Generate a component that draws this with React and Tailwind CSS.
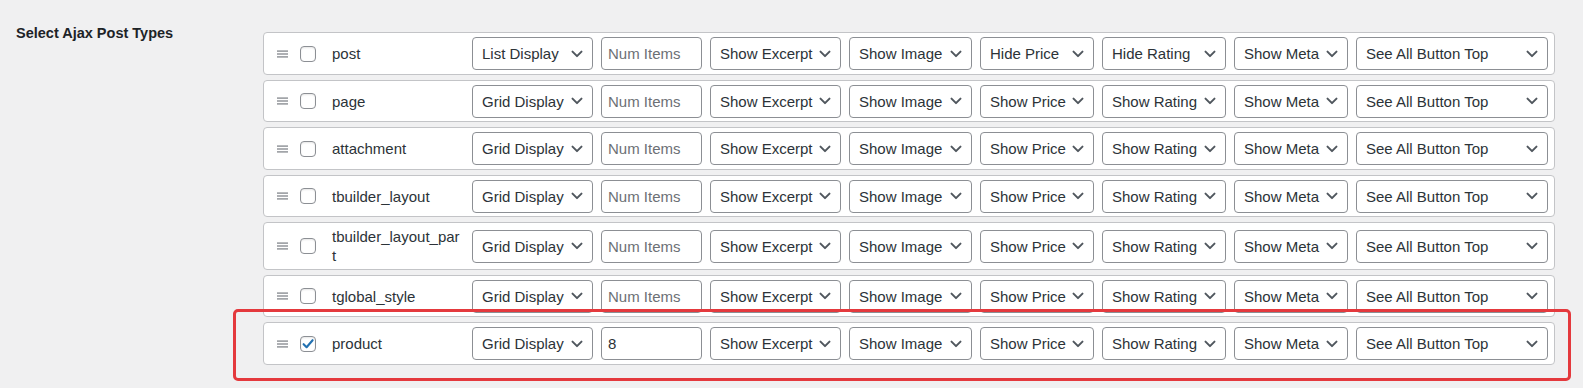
import React from "react";

const rows = [
  { name: "post", display: "List Display", num: "", price: "Hide Price", rating: "Hide Rating", checked: false },
  { name: "page", display: "Grid Display", num: "", price: "Show Price", rating: "Show Rating", checked: false },
  { name: "attachment", display: "Grid Display", num: "", price: "Show Price", rating: "Show Rating", checked: false },
  { name: "tbuilder_layout", display: "Grid Display", num: "", price: "Show Price", rating: "Show Rating", checked: false },
  { name: "tbuilder_layout_part", display: "Grid Display", num: "", price: "Show Price", rating: "Show Rating", checked: false },
  { name: "tglobal_style", display: "Grid Display", num: "", price: "Show Price", rating: "Show Rating", checked: false },
  { name: "product", display: "Grid Display", num: "8", price: "Show Price", rating: "Show Rating", checked: true },
];

function Chevron() {
  return (
    <svg width="12" height="8" viewBox="0 0 12 8" className="shrink-0">
      <path d="M1.5 1.6 L6 6.1 L10.5 1.6" fill="none" stroke="#50575e" strokeWidth="2" strokeLinecap="round" strokeLinejoin="round" />
    </svg>
  );
}

function Select({ label, w }) {
  return (
    <div className={`flex h-[33px] shrink-0 items-center justify-between whitespace-nowrap rounded-[4px] border border-[#8c8f94] bg-white pl-[9px] pr-[9px] text-[15px] leading-[19px] text-[#2c3338] ${w}`}>
      <span>{label}</span>
      <Chevron />
    </div>
  );
}

function Hamburger() {
  return (
    <svg width="11" height="8" viewBox="0 0 11 8" className="shrink-0">
      <rect x="0" y="0.4" width="11" height="1.4" fill="#8c8f94" />
      <rect x="0" y="3.3" width="11" height="1.4" fill="#8c8f94" />
      <rect x="0" y="6.2" width="11" height="1.4" fill="#8c8f94" />
    </svg>
  );
}

function Checkbox({ checked }) {
  return (
    <div className="flex h-4 w-4 shrink-0 items-center justify-center rounded-[4px] border border-[#8c8f94] bg-white shadow-[inset_0_1px_2px_rgba(0,0,0,0.1)]">
      {checked && (
        <svg width="14" height="14" viewBox="0 0 14 14">
          <path d="M2.6 7.2 L5.6 10.2 L11.6 3.2" fill="none" stroke="#2271b1" strokeWidth="2.1" strokeLinecap="round" strokeLinejoin="round" />
        </svg>
      )}
    </div>
  );
}

function Row({ r }) {
  return (
    <div className="flex items-center rounded-[4px] border border-[#c3c4c7] bg-white pb-[3.5px] pl-[13px] pr-[6px] pt-[4px]">
      <Hamburger />
      <div className="ml-[12px]">
        <Checkbox checked={r.checked} />
      </div>
      <div className="ml-[16px] w-[130px] shrink-0 break-all text-[15px] leading-[19px] text-[#2c3338]">{r.name}</div>
      <div className="ml-[10px] flex items-center gap-2">
        <Select label={r.display} w="w-[121px]" />
        <input
          readOnly
          value={r.num}
          placeholder="Num Items"
          className="h-[33px] w-[101px] shrink-0 rounded-[4px] border border-[#8c8f94] bg-white px-[6px] text-[15px] leading-[19px] text-[#2c3338] outline-none placeholder:text-[#6c7075]"
        />
        <Select label="Show Excerpt" w="w-[131px]" />
        <Select label="Show Image" w="w-[123px]" />
        <Select label={r.price} w="w-[114px]" />
        <Select label={r.rating} w="w-[124px]" />
        <Select label="Show Meta" w="w-[114px]" />
        <Select label="See All Button Top" w="w-[192px]" />
      </div>
    </div>
  );
}

export default function App() {
  return (
    <div className="relative flex min-h-[388px] w-full bg-[#f0f0f1] font-['Liberation_Sans',Arial,sans-serif]">
      <div className="w-[263px] shrink-0 pl-[16px] pt-[23px]">
        <div className="text-[14.5px] font-bold leading-[20px] text-[#1d2327]">Select Ajax Post Types</div>
      </div>
      <div className="flex w-[1292px] shrink-0 flex-col gap-[5px] pt-[32px]">
        {rows.map((r) => (
          <Row key={r.name} r={r} />
        ))}
      </div>
      <div className="pointer-events-none absolute left-[233px] top-[309px] h-[72px] w-[1338px] rounded-[5px] border-[3px] border-[#e4393d]" />
    </div>
  );
}
